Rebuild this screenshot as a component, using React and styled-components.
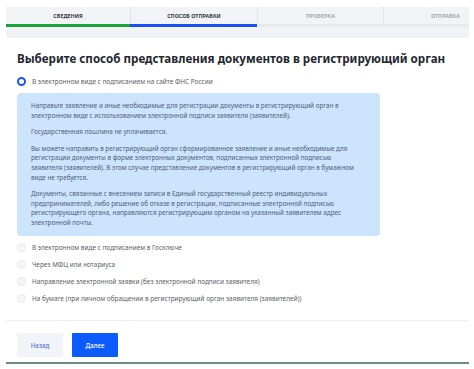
import React from "react";
import styled, { createGlobalStyle } from "styled-components";

const GlobalStyle = createGlobalStyle`
  html, body {
    margin: 0;
    padding: 0;
    background: #ffffff;
    font-family: "Noto Sans", "Open Sans", Arial, sans-serif;
  }
`;

const steps = [
  { label: "Сведения", state: "done" },
  { label: "Способ отправки", state: "active" },
  { label: "Проверка", state: "todo" },
  { label: "Отправка", state: "todo", align: "right" },
];

const options = [
  "В электронном виде с подписанием в Госключе",
  "Через МФЦ или нотариуса",
  "Направление электронной заявки (без электронной подписи заявителя)",
  "На бумаге (при личном обращении в регистрирующий орган заявителя (заявителей))",
];

export default function App() {
  return (
    <Page>
      <GlobalStyle />
      <Stepper>
        <Tabs>
          {steps.map((s) => (
            <Tab key={s.label} state={s.state} align={s.align}>
              {s.label}
            </Tab>
          ))}
        </Tabs>
        <Progress>
          {steps.map((s) => (
            <Bar key={s.label} state={s.state} />
          ))}
        </Progress>
      </Stepper>

      <Body>
        <Title>Выберите способ представления документов в регистрирующий орган</Title>

        <Selected>
          <Radio checked />
          <Label>В электронном виде с подписанием на сайте ФНС России</Label>
        </Selected>

        <InfoBox>
          <P>
            Направьте заявление и иные необходимые для регистрации документы в регистрирующий орган в
            <br />
            электронном виде с использованием электронной подписи заявителя (заявителей).
          </P>
          <P>Государственная пошлина не уплачивается.</P>
          <P>
            Вы можете направить в регистрирующий орган сформированное заявление и иные необходимые для
            <br />
            регистрации документы в форме электронных документов, подписанных электронной подписью
            <br />
            заявителя (заявителей). В этом случае представление документов в регистрирующий орган в бумажном
            <br />
            виде не требуется.
          </P>
          <P>
            Документы, связанные с внесением записи в Единый государственный реестр индивидуальных
            <br />
            предпринимателей, либо решение об отказе в регистрации, подписанные электронной подписью
            <br />
            регистрирующего органа, направляются регистрирующим органом на указанный заявителем адрес
            <br />
            электронной почты.
          </P>
        </InfoBox>

        <OptionList>
          {options.map((o) => (
            <Option key={o}>
              <Radio />
              <Label>{o}</Label>
            </Option>
          ))}
        </OptionList>
      </Body>

      <Divider />

      <Actions>
        <Button variant="secondary">Назад</Button>
        <Button variant="primary">Далее</Button>
      </Actions>

      <BottomEdge />
    </Page>
  );
}

const Page = styled.div`
  width: 474px;
  height: 369px;
  overflow: hidden;
  padding: 7px 5px 0 6px;
  box-sizing: border-box;
`;

const Stepper = styled.div`
  background: #f2f3f6;
  height: 31px;
`;

const Tabs = styled.div`
  display: grid;
  grid-template-columns: 124px 127px 126px 1fr;
  height: 17px;
`;

const Tab = styled.div`
  display: flex;
  align-items: center;
  justify-content: ${(p) => (p.align === "right" ? "flex-end" : "center")};
  padding-right: ${(p) => (p.align === "right" ? "9px" : "0")};
  font-size: 5.3px;
  font-weight: 700;
  text-transform: uppercase;
  letter-spacing: 0.05px;
  color: ${(p) => (p.state === "todo" ? "#a4a8b0" : "#33373f")};
  border-left: ${(p) => (p.state === "done" ? "none" : "1px solid #e2e4e8")};
`;

const Progress = styled.div`
  display: grid;
  grid-template-columns: 124px 127px 126px 1fr;
  height: 3px;
  background: #e8eaee;
`;

const Bar = styled.div`
  background: ${(p) =>
    p.state === "done" ? "#1aa63a" : p.state === "active" ? "#1a4ff5" : "transparent"};
`;

const Body = styled.div`
  padding: 0 0 0 11px;
`;

const Title = styled.h1`
  margin: 12px 0 0;
  font-family: "Noto Sans", Arial, sans-serif;
  font-size: 11.6px;
  font-weight: 700;
  color: #23272f;
  line-height: 18px;
  white-space: nowrap;
`;

const Option = styled.div`
  display: flex;
  align-items: center;
  height: 11px;
`;

const Selected = styled(Option)`
  margin-top: 8px;
`;

const OptionList = styled.div`
  display: flex;
  flex-direction: column;
  gap: 6px;
  margin-top: 6px;
`;

const Radio = styled.span`
  width: 9px;
  height: 9px;
  box-sizing: border-box;
  border-radius: 50%;
  margin-right: 6px;
  flex-shrink: 0;
  ${(p) =>
    p.checked
      ? `border: 2.6px solid #1658f0; background: #ffffff;`
      : `border: 1px solid #e6e8ec; background: #f6f7f9;`}
`;

const Label = styled.span`
  font-size: 6.45px;
  color: #5a5f68;
  white-space: nowrap;
`;

const InfoBox = styled.div`
  margin-top: 6px;
  width: 363px;
  height: 143px;
  box-sizing: border-box;
  background: #cde4fd;
  border-radius: 4px;
  padding: 8px 0 0 14px;
`;

const P = styled.p`
  margin: 0 0 7px;
  font-size: 6.32px;
  line-height: 9.6px;
  color: #4d5f7c;
  white-space: nowrap;
`;

const Divider = styled.div`
  margin-top: 16px;
  height: 1px;
  background: #eceef1;
`;

const Actions = styled.div`
  display: flex;
  gap: 9px;
  padding: 12px 0 0 11px;
`;

const Button = styled.button`
  width: 46px;
  height: 24px;
  border: none;
  border-radius: 1px;
  font-family: "Noto Sans", Arial, sans-serif;
  font-size: 6.2px;
  font-weight: 500;
  cursor: pointer;
  background: ${(p) => (p.variant === "primary" ? "#0b5cff" : "#f1f4f8")};
  color: ${(p) => (p.variant === "primary" ? "#ffffff" : "#5a76c4")};
`;

const BottomEdge = styled.div`
  margin-top: 5px;
  height: 2px;
  background: #6f8a82;
`;
